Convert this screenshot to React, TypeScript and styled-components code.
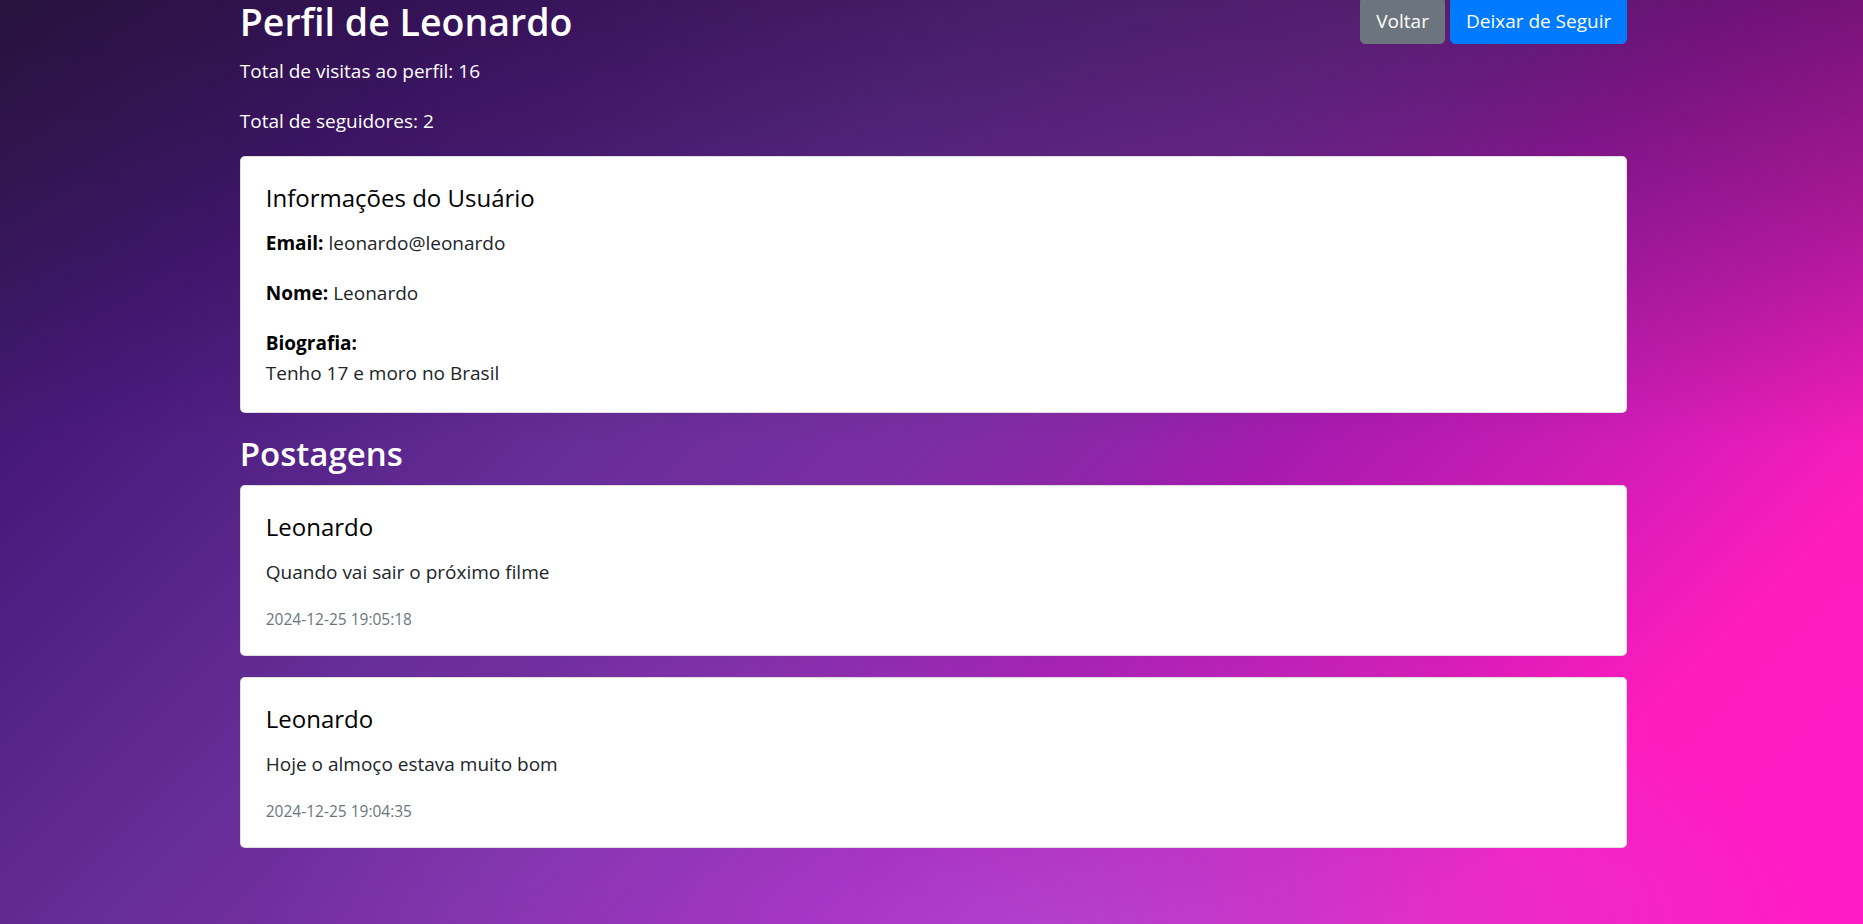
import React from "react";
import styled, { createGlobalStyle } from "styled-components";

const GlobalStyle = createGlobalStyle`
  html, body {
    margin: 0;
    padding: 0;
  }
  body {
    font-family: "Open Sans", "Noto Sans", "Liberation Sans", sans-serif;
    color: #212529;
    min-height: 100vh;
    background-color: #4a1f7e;
    background-image:
      radial-gradient(ellipse 42% 38% at 55% 102%, rgba(165, 90, 225, 0.6) 0%, rgba(165, 90, 225, 0) 100%),
      linear-gradient(to bottom, rgba(28, 8, 40, 0.42) 0%, rgba(28, 8, 40, 0) 48%),
      linear-gradient(135deg, #2f1a4c 0%, #47197a 17%, #652d97 36%, #7b2ea2 49%, #8e25a8 56%, #a61aae 62%, #d01cb4 74%, #ff1cbe 85%, #ff1cc6 100%);
    background-attachment: fixed;
  }
`;

const Page = styled.div`
  min-height: 100vh;
  padding-left: 4px;
  box-sizing: border-box;
`;

const Container = styled.main`
  width: 1425px;
  margin: 0 auto;
  padding: 0 18.75px;
  box-sizing: border-box;
`;

const Header = styled.header`
  display: flex;
  justify-content: space-between;
  align-items: flex-start;
  height: 44px;
  margin-bottom: 12px;
`;

const Title = styled.h2`
  margin: 0;
  font-size: 37.5px;
  line-height: 44px;
  font-weight: 600;
  color: #fff;
`;

const Actions = styled.div`
  display: flex;
  gap: 5px;
  margin-top: -3px;
`;

const Button = styled.button<{ $variant: "secondary" | "primary" }>`
  height: 47px;
  padding: 0 15px;
  border: 1px solid ${(p) => (p.$variant === "primary" ? "#007bff" : "#6c757d")};
  background: ${(p) => (p.$variant === "primary" ? "#007bff" : "#6c757d")};
  color: #fff;
  font-family: inherit;
  font-size: 19px;
  line-height: 30px;
  font-weight: 400;
  border-radius: 5px;
  cursor: pointer;
`;

const Stat = styled.p`
  margin: 0 0 20px;
  font-size: 19px;
  line-height: 30px;
  color: #fff;
`;

const Card = styled.section<{ $gap?: number }>`
  background: #fff;
  border: 1px solid rgba(0, 0, 0, 0.125);
  border-radius: 5px;
  padding: 26px 25px 24px;
  margin-bottom: ${(p) => p.$gap ?? 0}px;
`;

const CardTitle = styled.h5`
  margin: 0 0 15px;
  font-size: 24px;
  line-height: 30px;
  font-weight: 400;
  color: #000;
`;

const CardText = styled.p<{ $last?: boolean }>`
  margin: 0 0 ${(p) => (p.$last ? 0 : 20)}px;
  font-size: 19px;
  line-height: 30px;
  color: #212529;

  strong {
    font-weight: 700;
    color: #000;
  }
`;

const Stamp = styled.div`
  font-size: 15.5px;
  line-height: 24px;
  color: #6c757d;
`;

const SectionTitle = styled.h3`
  margin: 20px 0 10px;
  font-size: 33px;
  line-height: 42px;
  font-weight: 600;
  color: #fff;
`;

const posts = [
  { author: "Leonardo", text: "Quando vai sair o próximo filme", date: "2024-12-25 19:05:18" },
  { author: "Leonardo", text: "Hoje o almoço estava muito bom", date: "2024-12-25 19:04:35" },
];

export default function App() {
  return (
    <>
      <GlobalStyle />
      <Page>
        <Container>
          <Header>
            <Title>Perfil de Leonardo</Title>
            <Actions>
              <Button $variant="secondary">Voltar</Button>
              <Button $variant="primary">Deixar de Seguir</Button>
            </Actions>
          </Header>
          <Stat>Total de visitas ao perfil: 16</Stat>
          <Stat>Total de seguidores: 2</Stat>

          <Card>
            <CardTitle>Informações do Usuário</CardTitle>
            <CardText>
              <strong>Email:</strong> leonardo@leonardo
            </CardText>
            <CardText>
              <strong>Nome:</strong> Leonardo
            </CardText>
            <CardText $last>
              <strong>Biografia:</strong>
              <br />
              Tenho 17 e moro no Brasil
            </CardText>
          </Card>

          <SectionTitle>Postagens</SectionTitle>
          {posts.map((post, i) => (
            <Card key={i} $gap={21}>
              <CardTitle>{post.author}</CardTitle>
              <CardText>{post.text}</CardText>
              <Stamp>{post.date}</Stamp>
            </Card>
          ))}
        </Container>
      </Page>
    </>
  );
}
